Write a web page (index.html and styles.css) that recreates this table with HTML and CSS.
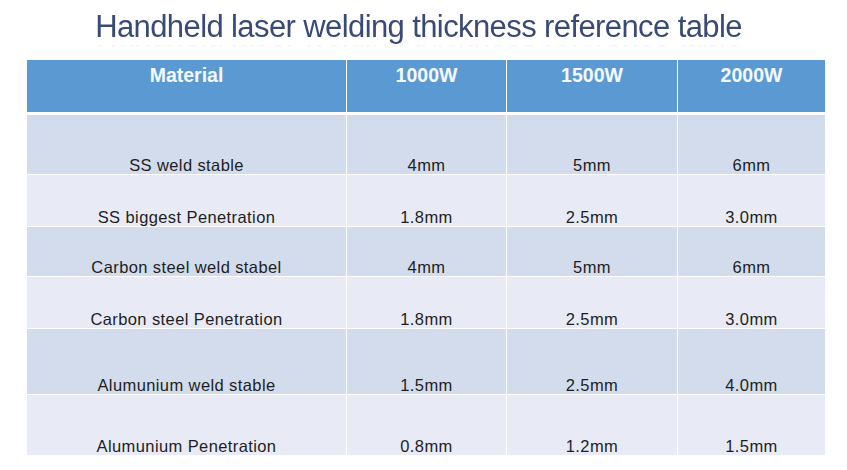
FILE: index.html
```html
<!DOCTYPE html>
<html lang="en">
<head>
<meta charset="utf-8">
<title>Handheld laser welding thickness reference table</title>
<link rel="stylesheet" href="styles.css">
</head>
<body>
<div class="page">
  <h1 class="title">Handheld laser welding thickness reference table</h1>
  <table class="ref">
    <colgroup>
      <col class="c-mat">
      <col class="c-1">
      <col class="c-2">
      <col class="c-3">
    </colgroup>
    <thead>
      <tr class="head">
        <th>Material</th>
        <th>1000W</th>
        <th>1500W</th>
        <th>2000W</th>
      </tr>
    </thead>
    <tbody>
      <tr class="band-a r1"><td>SS weld stable</td><td>4mm</td><td>5mm</td><td>6mm</td></tr>
      <tr class="band-b r2"><td>SS biggest Penetration</td><td>1.8mm</td><td>2.5mm</td><td>3.0mm</td></tr>
      <tr class="band-a r3"><td>Carbon steel weld stabel</td><td>4mm</td><td>5mm</td><td>6mm</td></tr>
      <tr class="band-b r4"><td>Carbon steel Penetration</td><td>1.8mm</td><td>2.5mm</td><td>3.0mm</td></tr>
      <tr class="band-a r5"><td>Alumunium weld stable</td><td>1.5mm</td><td>2.5mm</td><td>4.0mm</td></tr>
      <tr class="band-b r6"><td>Alumunium Penetration</td><td>0.8mm</td><td>1.2mm</td><td>1.5mm</td></tr>
    </tbody>
  </table>
</div>
</body>
</html>
```

FILE: styles.css
```css
html, body {
  margin: 0;
  padding: 0;
  background: #ffffff;
}

.page {
  width: 847px;
  height: 470px;
  padding-top: 11px;
  box-sizing: border-box;
  font-family: "Liberation Sans", Arial, sans-serif;
}

.title {
  margin: 0 0 18px 0;
  padding-right: 10px;
  font-family: "Liberation Sans", Arial, sans-serif;
  font-weight: normal;
  font-size: 31px;
  line-height: 31px;
  height: 31px;
  letter-spacing: -0.6px;
  text-align: center;
  color: #3a4a76;
  -webkit-box-reflect: below -2px linear-gradient(to bottom, rgba(0,0,0,0) 74%, rgba(0,0,0,0.18));
}

.ref {
  margin-left: 27px;
  width: 798px;
  table-layout: fixed;
  border-collapse: separate;
  border-spacing: 0;
}

.c-mat { width: 320px; }
.c-1 { width: 160px; }
.c-2 { width: 171px; }
.c-3 { width: 147px; }

.ref th,
.ref td {
  padding: 0;
  text-align: center;
  border-right: 1px solid #ffffff;
  border-bottom: 1px solid #ffffff;
}

.ref th:last-child,
.ref td:last-child {
  border-right: none;
}

.head { height: 55px; }

.head th {
  vertical-align: top;
  padding-top: 5px;
  background: #5b99d3;
  color: #f4f9ff;
  font-size: 19.5px;
  line-height: 20px;
  font-weight: bold;
  border-bottom: 3px solid #ffffff;
}

.ref td {
  vertical-align: bottom;
  padding-bottom: 0;
  font-size: 16.5px;
  line-height: 17px;
  letter-spacing: 0.4px;
  color: #1e1e22;
}

.band-a td { background: #d2dcec; }
.band-b td { background: #e8ebf6; }

.r1 { height: 60px; }
.r2 { height: 52px; }
.r3 { height: 50px; }
.r4 { height: 52px; }
.r5 { height: 66px; }
.r6 { height: 61px; }
```
